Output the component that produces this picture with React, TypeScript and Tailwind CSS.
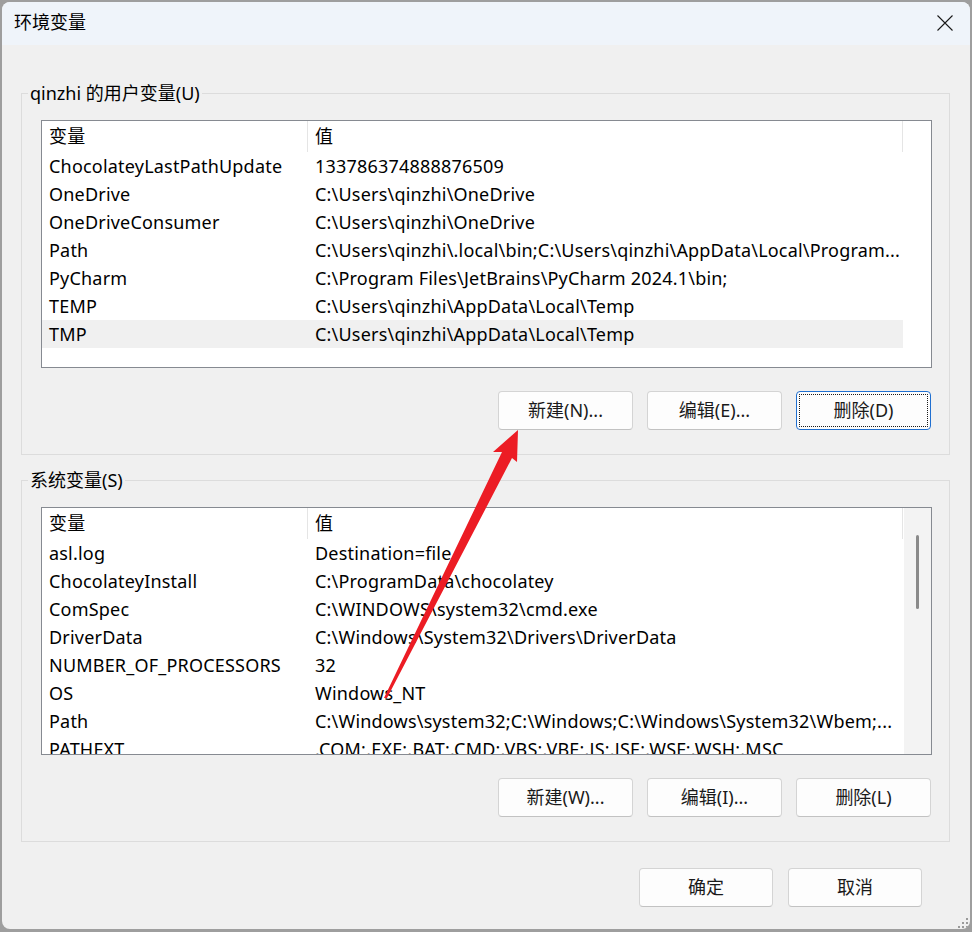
import React from 'react';

const userVars: [string, string][] = [
  ['ChocolateyLastPathUpdate', '133786374888876509'],
  ['OneDrive', 'C:\\Users\\qinzhi\\OneDrive'],
  ['OneDriveConsumer', 'C:\\Users\\qinzhi\\OneDrive'],
  ['Path', 'C:\\Users\\qinzhi\\.local\\bin;C:\\Users\\qinzhi\\AppData\\Local\\Program...'],
  ['PyCharm', 'C:\\Program Files\\JetBrains\\PyCharm 2024.1\\bin;'],
  ['TEMP', 'C:\\Users\\qinzhi\\AppData\\Local\\Temp'],
  ['TMP', 'C:\\Users\\qinzhi\\AppData\\Local\\Temp'],
];

const sysVars: [string, string][] = [
  ['asl.log', 'Destination=file'],
  ['ChocolateyInstall', 'C:\\ProgramData\\chocolatey'],
  ['ComSpec', 'C:\\WINDOWS\\system32\\cmd.exe'],
  ['DriverData', 'C:\\Windows\\System32\\Drivers\\DriverData'],
  ['NUMBER_OF_PROCESSORS', '32'],
  ['OS', 'Windows_NT'],
  ['Path', 'C:\\Windows\\system32;C:\\Windows;C:\\Windows\\System32\\Wbem;...'],
  ['PATHEXT', '.COM;.EXE;.BAT;.CMD;.VBS;.VBE;.JS;.JSE;.WSF;.WSH;.MSC'],
];

function WinButton({ label, focused, wide }: { label: string; focused?: boolean; wide?: boolean }) {
  const size = wide ? 'w-[135px]' : 'w-[134px]';
  if (focused) {
    return (
      <button className={`${size} h-[39px] rounded-[4px] border border-[#1f6fd0] bg-[#fdfdfd] text-[#1a1a1a] outline-1 outline-dotted outline-offset-[-4px] outline-[#1a1a1a]`}>
        {label}
      </button>
    );
  }
  return (
    <button className={`${size} h-[39px] rounded-[4px] border border-[#d4d4d4] border-b-[#c2c2c2] bg-[#fdfdfd] text-[#1a1a1a]`}>
      {label}
    </button>
  );
}

function VarList({ rows, selected, scroll }: { rows: [string, string][]; selected?: number; scroll?: boolean }) {
  return (
    <div className="flex h-[248px] overflow-hidden border border-[#868a91] bg-white tracking-[0.2px]">
      <div className="w-[861px] flex-none">
        <div className="flex h-[31px]">
          <div className="flex w-[266px] items-center border-r border-[#e5e5e5] pl-[7px]">变量</div>
          <div className="flex w-[595px] items-center border-r border-[#e5e5e5] pl-[7px]">值</div>
        </div>
        {rows.map(([name, value], i) => (
          <div
            key={name + i}
            className={`flex h-[28px] leading-[28px] whitespace-nowrap ${i === selected ? 'bg-[#f0f0f0]' : ''}`}
          >
            <div className="w-[266px] overflow-hidden pl-[7px]">{name}</div>
            <div className="w-[595px] overflow-hidden pl-[7px]">{value}</div>
          </div>
        ))}
      </div>
      {scroll && (
        <div className="ml-[1px] flex flex-1 justify-center bg-[#f3f3f3] pt-[27px]">
          <div className="h-[74px] w-[3px] rounded-full bg-[#8a8a8a]" />
        </div>
      )}
    </div>
  );
}

function Group({ title, children }: { title: string; children: React.ReactNode }) {
  return (
    <fieldset className="min-w-0 border border-[#dcdcdc]">
      <legend className="ml-[6px] px-[2px] leading-[24px]">{title}</legend>
      <div className="pl-[19px] pr-[17px] pt-[15px] pb-[24px]">{children}</div>
    </fieldset>
  );
}

export default function App() {
  return (
    <div
      className="relative h-[932px] w-[972px] overflow-hidden bg-[#9e9e9e] pl-[2px] pt-[2px] text-[18px] text-black"
      style={{ fontFamily: '"Noto Sans", "Noto Sans CJK SC", sans-serif' }}
    >
      <div className="relative flex h-[927px] w-[968px] flex-col overflow-hidden rounded-[8px] bg-[#f0f0f0]">
        <div className="flex h-[43px] flex-none items-center justify-between bg-[#eff4fa] pl-[12px] pr-[17px]">
          <span className="pb-[2px]">环境变量</span>
          <svg width="16" height="16" viewBox="0 0 16 16" className="mb-[1px]">
            <path d="M0.5 0.5L15.5 15.5M15.5 0.5L0.5 15.5" stroke="#1a1a1a" strokeWidth="1.1" fill="none" />
          </svg>
        </div>

        <div className="ml-[19px] mr-[20px] mt-[36px]">
          <Group title="qinzhi 的用户变量(U)">
            <VarList rows={userVars} selected={6} />
            <div className="mt-[23px] flex justify-end gap-[14px] pr-[1px]">
              <WinButton label="新建(N)..." wide />
              <WinButton label="编辑(E)..." wide />
              <WinButton label="删除(D)" wide focused />
            </div>
          </Group>

          <div className="mt-[13px]">
            <Group title="系统变量(S)">
              <VarList rows={sysVars} scroll />
              <div className="mt-[23px] flex justify-end gap-[14px] pr-[1px]">
                <WinButton label="新建(W)..." wide />
                <WinButton label="编辑(I)..." wide />
                <WinButton label="删除(L)" wide />
              </div>
            </Group>
          </div>

          <div className="mt-[26px] flex justify-end gap-[15px] pr-[28px]">
            <WinButton label="确定" />
            <WinButton label="取消" />
          </div>
        </div>

        <svg width="10" height="10" viewBox="0 0 10 10" className="absolute bottom-[1px] right-[2px]">
          <g fill="#9a9a9a">
            <rect x="8" y="0" width="2" height="2" />
            <rect x="4" y="4" width="2" height="2" />
            <rect x="8" y="4" width="2" height="2" />
            <rect x="0" y="8" width="2" height="2" />
            <rect x="4" y="8" width="2" height="2" />
            <rect x="8" y="8" width="2" height="2" />
          </g>
        </svg>
      </div>

      <svg width="972" height="932" viewBox="0 0 972 932" className="pointer-events-none absolute left-0 top-0">
        <polygon
          points="518,430 517,462 512,458 387,698 384,698 502,452 493,452"
          fill="#ec1c24"
        />
      </svg>
    </div>
  );
}
